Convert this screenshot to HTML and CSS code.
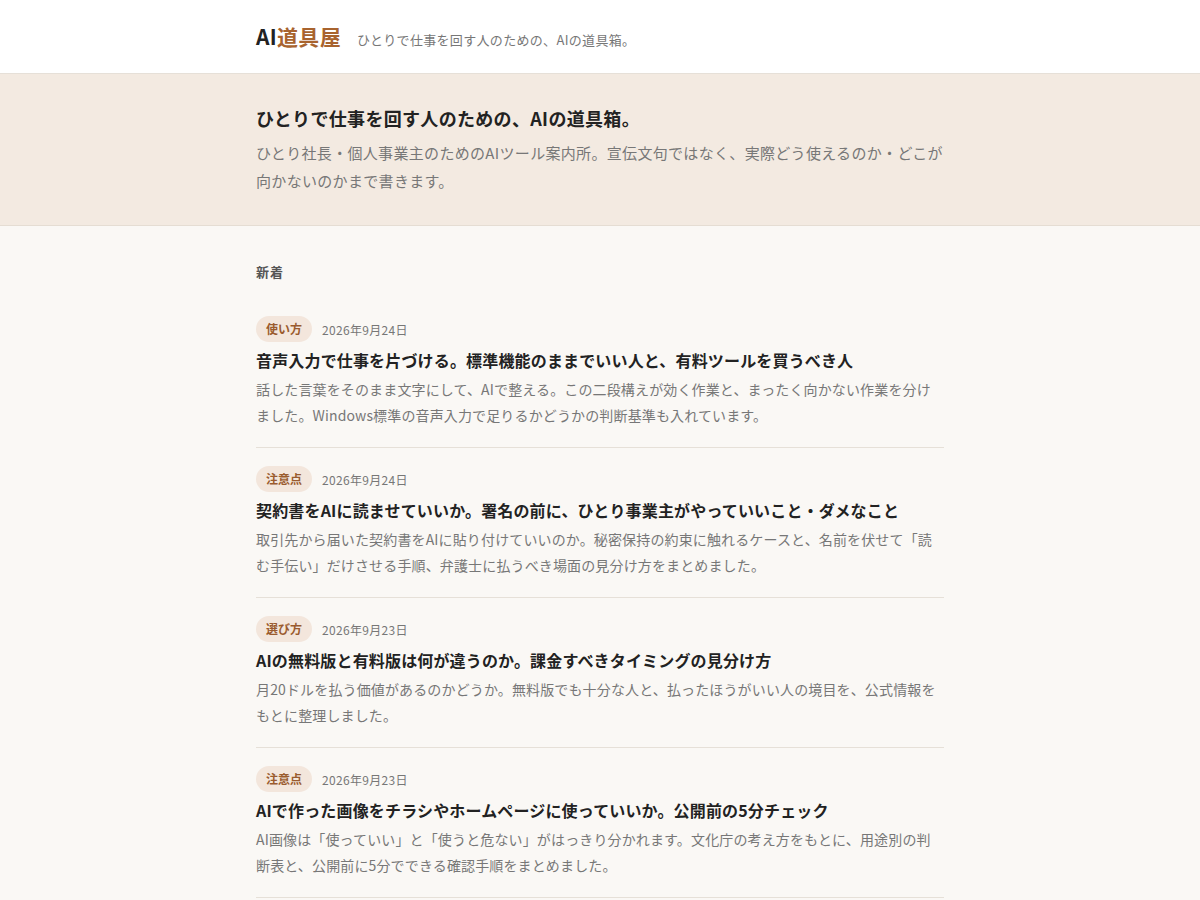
FILE: index.html
```html
<!DOCTYPE html>
<html lang="ja">
<head>
<meta charset="utf-8">
<title>AI道具屋</title>
<link rel="stylesheet" href="styles.css">
</head>
<body>
<header class="site-header">
  <div class="container header-inner">
    <a class="logo" href="#"><span class="logo-ai">AI</span><span class="logo-jp">道具屋</span></a>
    <span class="tagline">ひとりで仕事を回す人のための、AIの道具箱。</span>
  </div>
</header>
<section class="hero">
  <div class="container">
    <h1 class="hero-title">ひとりで仕事を回す人のための、AIの道具箱。</h1>
    <p class="hero-desc">ひとり社長・個人事業主のためのAIツール案内所。宣伝文句ではなく、実際どう使えるのか・どこが向かないのかまで書きます。</p>
  </div>
</section>
<main class="main">
  <div class="container">
    <h2 class="section-label">新着</h2>
    <article class="post">
      <div class="meta"><span class="tag">使い方</span><span class="date">2026年9月24日</span></div>
      <h3 class="post-title">音声入力で仕事を片づける。標準機能のままでいい人と、有料ツールを買うべき人</h3>
      <p class="post-desc">話した言葉をそのまま文字にして、AIで整える。この二段構えが効く作業と、まったく向かない作業を分けました。Windows標準の音声入力で足りるかどうかの判断基準も入れています。</p>
    </article>
    <article class="post">
      <div class="meta"><span class="tag">注意点</span><span class="date">2026年9月24日</span></div>
      <h3 class="post-title">契約書をAIに読ませていいか。署名の前に、ひとり事業主がやっていいこと・ダメなこと</h3>
      <p class="post-desc">取引先から届いた契約書をAIに貼り付けていいのか。秘密保持の約束に触れるケースと、名前を伏せて「読む手伝い」だけさせる手順、弁護士に払うべき場面の見分け方をまとめました。</p>
    </article>
    <article class="post">
      <div class="meta"><span class="tag">選び方</span><span class="date">2026年9月23日</span></div>
      <h3 class="post-title">AIの無料版と有料版は何が違うのか。課金すべきタイミングの見分け方</h3>
      <p class="post-desc">月20ドルを払う価値があるのかどうか。無料版でも十分な人と、払ったほうがいい人の境目を、公式情報をもとに整理しました。</p>
    </article>
    <article class="post">
      <div class="meta"><span class="tag">注意点</span><span class="date">2026年9月23日</span></div>
      <h3 class="post-title">AIで作った画像をチラシやホームページに使っていいか。公開前の5分チェック</h3>
      <p class="post-desc">AI画像は「使っていい」と「使うと危ない」がはっきり分かれます。文化庁の考え方をもとに、用途別の判断表と、公開前に5分でできる確認手順をまとめました。</p>
    </article>
  </div>
</main>
</body>
</html>
```

FILE: styles.css
```css
* { box-sizing: border-box; }
html, body { margin: 0; padding: 0; }
body {
  font-family: "Noto Sans CJK JP", "Noto Sans", sans-serif;
  color: #222;
  background: #faf8f5;
  letter-spacing: 0.02em;
}
.container {
  width: 688px;
  margin: 0 auto;
}
.site-header {
  background: #fff;
  border-bottom: 1px solid #e6e0d8;
}
.header-inner {
  display: flex;
  align-items: baseline;
  gap: 16px;
  padding: 20px 0;
}
.logo {
  text-decoration: none;
  font-size: 21px;
  font-weight: 700;
  line-height: 33px;
}
.logo-ai { color: #222; }
.logo-jp { color: #a8632e; }
.tagline {
  font-size: 13px;
  color: #777;
}
.hero {
  background: #f3eae1;
  border-bottom: 1px solid #e5ddd3;
  padding: 31px 0 30px;
}
.hero-title {
  margin: 0 0 7px;
  font-size: 18px;
  line-height: 27px;
  font-weight: 700;
  color: #222;
}
.hero-desc {
  margin: 0;
  font-size: 15px;
  line-height: 28px;
  color: #777;
}
.main {
  padding: 36px 0 40px;
}
.section-label {
  margin: 0;
  font-size: 13px;
  line-height: 20px;
  font-weight: 700;
  color: #555;
  letter-spacing: 1px;
}
.post {
  padding: 18px 0 19px;
  border-bottom: 1px solid #e6e0d8;
}
.section-label + .post { margin-top: 16px; }
.meta {
  display: flex;
  align-items: center;
  gap: 10px;
  height: 26px;
  margin-bottom: 6px;
}
.tag {
  display: inline-block;
  background: #f3e6dc;
  color: #9a5b2e;
  font-size: 12px;
  font-weight: 700;
  line-height: 26px;
  padding: 0 10px;
  border-radius: 13px;
  letter-spacing: 0;
}
.date {
  font-size: 12px;
  color: #777;
}
.post-title {
  margin: 0 0 3px;
  font-size: 16px;
  line-height: 25px;
  font-weight: 700;
  color: #222;
  letter-spacing: 0.01em;
}
.post-desc {
  margin: 0;
  font-size: 14px;
  line-height: 26px;
  color: #777;
  letter-spacing: 0.01em;
}
```
